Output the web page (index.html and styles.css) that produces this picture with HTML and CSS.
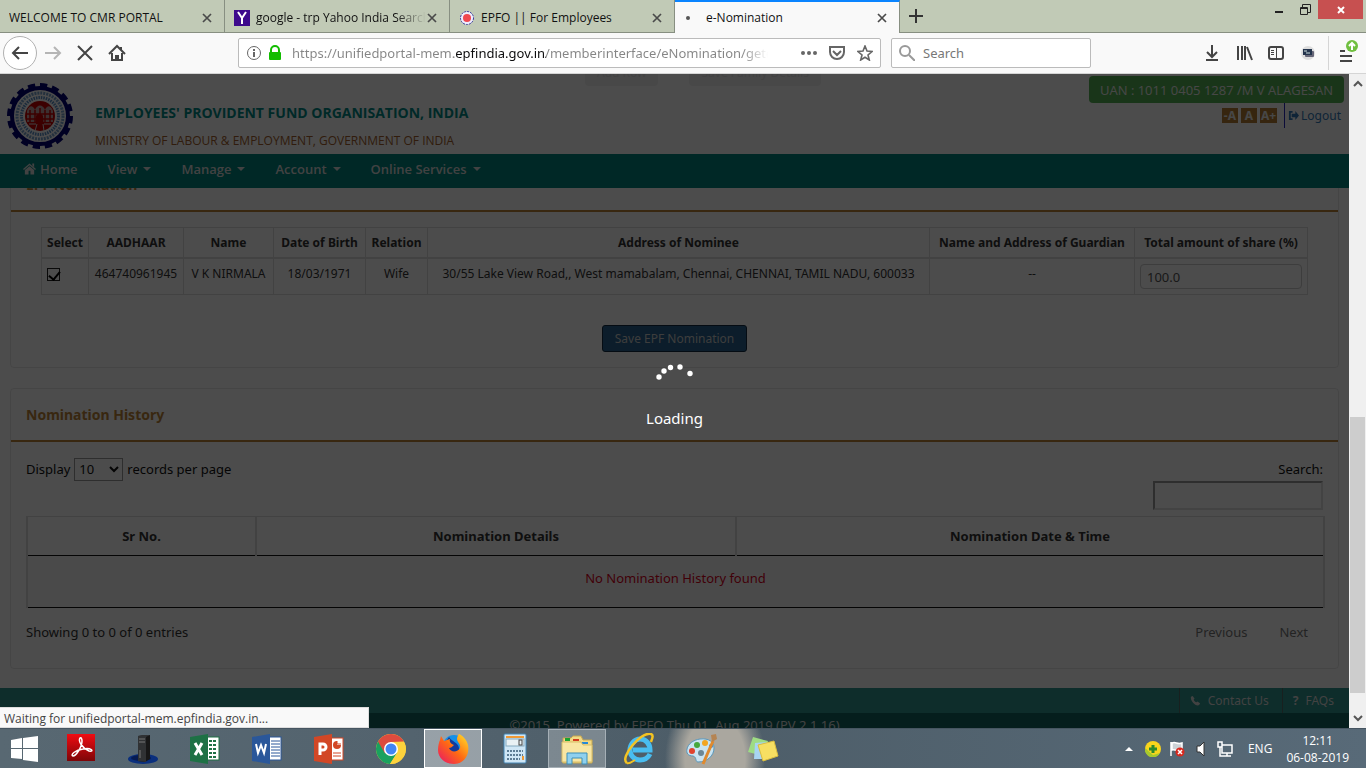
FILE: index.html
```html
<!DOCTYPE html>
<html lang="en">
<head>
<meta charset="utf-8">
<title>e-Nomination</title>
<link rel="stylesheet" href="styles.css">
</head>
<body>
<svg class="defs" aria-hidden="true">
  <symbol id="close" viewBox="0 0 12 12"><path d="M2 2l8 8M10 2l-8 8" fill="none" stroke="#4a4a4a" stroke-width="1.700"/></symbol>
  <symbol id="emblem" viewBox="0 0 66 66">
    <circle cx="33" cy="33" r="28" fill="none" stroke="#000075" stroke-width="4"/>
    <circle cx="33" cy="33" r="30.500" fill="none" stroke="#000075" stroke-width="5" pathLength="160" stroke-dasharray="6 4"/>
    <circle cx="33" cy="33" r="23" fill="none" stroke="#7ba3cf" stroke-width="3" stroke-dasharray="2 1"/>
    <circle cx="33" cy="33" r="18.500" fill="none" stroke="#5a8fc8" stroke-width="3" stroke-dasharray="1.500 1"/>
    <circle cx="33" cy="33" r="15" fill="#c80000"/>
    <path d="M20 28c2-6 6-6 8-1 2-6 8-6 10 0 2-5 6-5 8 1v11H20z" fill="#c9a0a0"/>
    <path d="M19 31h28M19 36h28M23 27v13M28 27v13M33 25v15M38 27v13M43 27v13" stroke="#c80000" stroke-width="1.500"/>
    <path d="M29 33c1-3 6-3 7 0l1 14h-9z" fill="#c80000"/>
    <path d="M30 41l-2 7M36 41l1 7M22 41h7M37 41h7" stroke="#ddd"/>
  </symbol>
</svg>

<div class="tabs">
  <div class="tab"><span class="tab-title">WELCOME TO CMR PORTAL</span><button class="tab-close" aria-label="Close tab"><svg><use href="#close"/></svg></button></div>
  <div class="tab"><svg class="fav" viewBox="0 0 16 16"><rect width="16" height="16" fill="#3d0a8c"/><path d="M4 2l4 6 4-6M8 8v6" fill="none" stroke="#fff" stroke-width="2"/></svg><span class="tab-title fade">google - trp Yahoo India Search</span><button class="tab-close" aria-label="Close tab"><svg><use href="#close"/></svg></button></div>
  <div class="tab"><svg class="fav" viewBox="0 0 16 16"><circle cx="8" cy="8" r="6.500" fill="#eef" stroke="#3a3a9a" stroke-dasharray="2 1"/><circle cx="8" cy="8" r="4" fill="#f04850"/></svg><span class="tab-title">EPFO || For Employees</span><button class="tab-close" aria-label="Close tab"><svg><use href="#close"/></svg></button></div>
  <div class="tab active"><svg class="fav" viewBox="0 0 16 16"><circle cx="4" cy="8" r="2" fill="#555"/></svg><span class="tab-title">e-Nomination</span><button class="tab-close" aria-label="Close tab"><svg><use href="#close"/></svg></button></div>
  <button class="new-tab" aria-label="New tab"><svg viewBox="0 0 14 14"><path d="M7 0v14M0 7h14" stroke="#333" stroke-width="2"/></svg></button>
  <div class="window-buttons">
    <button class="win" aria-label="Minimize"><svg viewBox="0 0 12 12"><path d="M2 8h8" stroke="#222" stroke-width="2"/></svg></button>
    <button class="win" aria-label="Restore"><svg viewBox="0 0 12 12"><path d="M3.500 3V.5h8v8H9M1.500 3.500h7v7h-7zM1 4.500h8" fill="none" stroke="#222"/></svg></button>
    <button class="win win-close" aria-label="Close"><svg viewBox="0 0 12 12"><path d="M3 3l6 6M9 3l-6 6" stroke="#fff" stroke-width="2"/></svg></button>
  </div>
</div>

<div class="toolbar">
  <button class="back" aria-label="Back"><svg viewBox="0 0 18 18"><path d="M17 9H2M8 3L2 9l6 6" fill="none" stroke="#444" stroke-width="2"/></svg></button>
  <button class="tool" aria-label="Forward"><svg viewBox="0 0 18 18"><path d="M1 9h15M10 3l6 6-6 6" fill="none" stroke="#b5b5b5" stroke-width="2"/></svg></button>
  <button class="tool" aria-label="Stop"><svg viewBox="0 0 18 18"><path d="M2 2l14 14M16 2L2 16" fill="none" stroke="#444" stroke-width="2"/></svg></button>
  <button class="tool" aria-label="Home"><svg viewBox="0 0 18 18"><path d="M1 10l8-8 8 8M4 9v7h10V9M13 3v3" fill="none" stroke="#444" stroke-width="2"/><path d="M7 16v-5h4v5" fill="#444"/></svg></button>
  <div class="url-box">
    <svg class="ic" viewBox="0 0 16 16"><circle cx="8" cy="8" r="6.500" fill="none" stroke="#666"/><path d="M8 7v5M8 4v2" stroke="#666" stroke-width="2"/></svg>
    <svg class="ic lock" viewBox="0 0 16 16"><path d="M4 8V5a4 4 0 0 1 8 0v3" fill="none" stroke="#12bc00" stroke-width="2"/><rect x="2" y="7" width="12" height="8" rx="1" fill="#12bc00"/></svg>
    <input class="url" type="text" aria-label="Address" value="https://unifiedportal-mem.epfindia.gov.in/memberinterface/eNomination/getenom">
    <button class="ic" aria-label="Page actions"><svg viewBox="0 0 16 16"><g fill="#666"><circle cx="2" cy="8" r="2"/><circle cx="8" cy="8" r="2"/><circle cx="14" cy="8" r="2"/></g></svg></button>
    <button class="ic" aria-label="Pocket"><svg viewBox="0 0 16 16"><path d="M1 2h14v5a7 7 0 0 1-14 0zM4 6l4 4 4-4" fill="none" stroke="#666" stroke-width="2"/></svg></button>
    <button class="ic" aria-label="Bookmark"><svg viewBox="0 0 16 16"><path d="M8 1l2 5 5 .5-4 3.500 1.300 5L8 12.300 3.700 15 5 10 1 6.500 6 6z" fill="none" stroke="#666" stroke-width="1.600"/></svg></button>
  </div>
  <div class="search-box">
    <svg class="ic" viewBox="0 0 16 16"><circle cx="6" cy="6" r="5" fill="none" stroke="#999" stroke-width="2"/><path d="M10 10l6 6" stroke="#999" stroke-width="2"/></svg>
    <input type="text" placeholder="Search" aria-label="Search the web">
  </div>
  <div class="tools-right">
    <button class="tool" aria-label="Downloads"><svg viewBox="0 0 18 18"><path d="M9 1v11M4 8l5 5 5-5M3 16h12" fill="none" stroke="#444" stroke-width="2"/></svg></button>
    <button class="tool" aria-label="Library"><svg viewBox="0 0 18 18"><path d="M3 2v14M7 2v14M10 2v14M12 3l5 13" fill="none" stroke="#444" stroke-width="2"/></svg></button>
    <button class="tool" aria-label="Sidebars"><svg viewBox="0 0 18 18"><rect x="2" y="3" width="14" height="12" rx="2" fill="none" stroke="#444" stroke-width="2"/><path d="M9.500 3v12M4 6.500h3M4 8.500h3M4 10.500h3" stroke="#444"/></svg></button>
    <button class="tool" aria-label="Extension"><svg viewBox="0 0 18 18"><circle cx="9" cy="9" r="7" fill="#ddd"/><rect x="6" y="7" width="9" height="6" rx="1" fill="#667"/><rect x="4" y="5" width="9" height="6" fill="#24344d"/><path d="M5 7h3M7 9h4" stroke="#cdd"/></svg></button>
    <button class="menu" aria-label="Menu"><svg viewBox="0 0 26 26"><path d="M5 11h5M5 16h12M5 21h12" stroke="#444" stroke-width="2"/><circle cx="17" cy="6" r="6" fill="#70bf3f"/><path d="M17 10V3M14 6l3-3 3 3" fill="none" stroke="#fff" stroke-width="2"/></svg></button>
  </div>
</div>

<div class="viewport">
  <div class="page">
    <header class="header">
      <div class="peek"><button>Add Row</button><button>Save Family Details</button></div>
      <svg class="logo"><use href="#emblem"/></svg>
      <div class="org"><h1>EMPLOYEES' PROVIDENT FUND ORGANISATION, INDIA</h1><p>MINISTRY OF LABOUR &amp; EMPLOYMENT, GOVERNMENT OF INDIA</p></div>
      <div class="account">
        <div class="uan">UAN : 1011 0405 1287 /M V ALAGESAN</div>
        <div class="account-links">
          <button class="size">-A</button><button class="size">A</button><button class="size">A+</button>
          <a class="logout" href="#"><svg viewBox="0 0 12 12"><path d="M5 2H2v8h3" fill="none" stroke="#337ab7" stroke-width="2"/><path d="M4 4h4V1l4 5-4 5V8H4z" fill="#337ab7"/></svg>Logout</a>
        </div>
      </div>
    </header>
    <nav class="nav">
      <a href="#"><svg class="house" viewBox="0 0 14 12"><path d="M7 0l7 6-1 1-6-5-6 5-1-1zM10 0h2v4l-2-2zM2 7l5-4 5 4v5H8V8H6v4H2z" fill="#ddd"/></svg>Home</a>
      <a href="#">View<i class="caret"></i></a>
      <a href="#">Manage<i class="caret"></i></a>
      <a href="#">Account<i class="caret"></i></a>
      <a href="#">Online Services<i class="caret"></i></a>
    </nav>
    <main class="content">
      <section class="panel first">
        <h2>EPF Nomination</h2>
        <div class="table-wrap">
          <table class="nominees">
            <colgroup><col class="c1"><col class="c2"><col class="c3"><col class="c4"><col class="c5"><col class="c6"><col class="c7"><col class="c8"></colgroup>
            <thead><tr><th>Select</th><th>AADHAAR</th><th>Name</th><th>Date of Birth</th><th>Relation</th><th>Address of Nominee</th><th>Name and Address of Guardian</th><th>Total amount of share (%)</th></tr></thead>
            <tbody><tr><td class="pick"><input type="checkbox" checked aria-label="Select V K NIRMALA"></td><td>464740961945</td><td>V K NIRMALA</td><td>18/03/1971</td><td>Wife</td><td>30/55 Lake View Road,, West mamabalam, Chennai, CHENNAI, TAMIL NADU, 600033</td><td>--</td><td><input class="share" type="text" value="100.0" aria-label="Total amount of share (%)"></td></tr></tbody>
          </table>
          <button class="save">Save EPF Nomination</button>
        </div>
      </section>
      <section class="panel">
        <h2>Nomination History</h2>
        <div class="history-wrap">
          <div class="filters">
            <label class="length">Display <select><option>10</option><option>25</option></select> records per page</label>
            <label class="find">Search:<input type="search"></label>
          </div>
          <table class="history">
            <colgroup><col class="h1"><col class="h2"><col class="h3"></colgroup>
            <thead><tr><th>Sr No.</th><th>Nomination Details</th><th>Nomination Date &amp; Time</th></tr></thead>
            <tbody><tr><td colspan="3">No Nomination History found</td></tr></tbody>
          </table>
          <div class="paging"><span>Showing 0 to 0 of 0 entries</span><div class="pages"><a href="#">Previous</a><a href="#">Next</a></div></div>
        </div>
      </section>
    </main>
    <footer>
      <div class="foot-links">
        <a href="#"><svg viewBox="0 0 12 12"><path d="M1 2l2-1 2 3-1 1c0 1 2 3 3 3l1-1 3 2-1 2C6 13 0 6 1 2z" fill="#ddd"/></svg>Contact Us</a>
        <a href="#"><b>?</b>FAQs</a>
      </div>
      <div class="copyright">©2015. Powered by EPFO Thu 01, Aug 2019 (PV 2.1.16)</div>
    </footer>
    <div class="overlay"><svg viewBox="0 0 42 24"><g fill="#fff"><circle cx="5" cy="17" r="2.700"/><circle cx="10" cy="11" r="2.700"/><circle cx="16.500" cy="7.500" r="2.700"/><circle cx="26" cy="7" r="2.700"/><circle cx="36" cy="13.500" r="2.700"/></g></svg><p>Loading</p></div>
    <div class="status">Waiting for unifiedportal-mem.epfindia.gov.in...</div>
  </div>
  <div class="scrollbar">
    <svg viewBox="0 0 10 10"><path d="M1 7l4-4 4 4" fill="none" stroke="#555" stroke-width="2"/></svg>
    <div class="track"><div class="thumb"></div></div>
    <svg viewBox="0 0 10 10"><path d="M1 3l4 4 4-4" fill="none" stroke="#555" stroke-width="2"/></svg>
  </div>
</div>

<div class="taskbar">
  <button class="start" aria-label="Start"><svg viewBox="0 0 28 26"><path d="M0 4l11-2v10H0zM12 2l15-2v12H12zM0 13h11v10L0 22zM12 13h15v13l-15-2z" fill="#fff"/></svg></button>
  <button class="app" aria-label="Adobe Reader"><svg viewBox="0 0 32 32"><defs><linearGradient id="ad" x2="0" y2="1"><stop stop-color="#f00c12"/><stop offset="1" stop-color="#7d0508"/></linearGradient></defs><rect x="2" y="1" width="28" height="27" fill="url(#ad)"/><path d="M15 5c-2 3 2 10 9 13 6 1 2-4-6-2-8 1-13 6-10 7 3 0 9-9 9-15 0-2-1-4-2-3z" fill="none" stroke="#fff" stroke-width="1.500"/></svg></button>
  <button class="app" aria-label="Computer"><svg viewBox="0 0 32 32"><ellipse cx="16" cy="26" rx="15" ry="5" fill="#0a2f7d"/><ellipse cx="14" cy="25" rx="10" ry="3" fill="#061b52"/><path d="M11 3l12-1v24l-5 3-7-1z" fill="#171717"/><path d="M11 3l4-1h8l-4 2v25l-8-1z" fill="#303234"/><path d="M12 6h6M12 9h6M13 17v8" stroke="#777"/></svg></button>
  <button class="app" aria-label="Excel"><svg viewBox="0 0 32 32"><rect x="17" y="4" width="13" height="23" fill="#fff" stroke="#1e7145"/><path d="M20 8h8M20 12h8M20 16h8M20 20h8M20 24h8" stroke="#1e7145" stroke-width="2" stroke-dasharray="3 1"/><path d="M1 4l18-3v30L1 28z" fill="#1e7145"/><path d="M6 10l7 12M13 10L6 22" stroke="#fff" stroke-width="3"/></svg></button>
  <button class="app" aria-label="Word"><svg viewBox="0 0 32 32"><rect x="17" y="4" width="13" height="23" fill="#fff" stroke="#2a579a"/><path d="M20 8h9M20 11h9M20 14h9M20 17h9M20 20h9M20 23h9" stroke="#2a579a"/><path d="M1 4l18-3v30L1 28z" fill="#2a579a"/><path d="M5 11l2 9 3-8 3 8 2-9" fill="none" stroke="#fff" stroke-width="2"/></svg></button>
  <button class="app" aria-label="PowerPoint"><svg viewBox="0 0 32 32"><rect x="17" y="5" width="13" height="22" fill="#fff" stroke="#d24726"/><circle cx="24" cy="12" r="4" fill="#d24726"/><path d="M24 12V7h5v5z" fill="#fff"/><path d="M24 11V8M24 11h4M20 20h8M20 23h8" stroke="#d24726"/><path d="M1 4l18-3v30L1 28z" fill="#d24726"/><path d="M7 22V11h3a3 3 0 0 1 0 6H7" fill="none" stroke="#fff" stroke-width="3"/></svg></button>
  <button class="app" aria-label="Chrome"><svg viewBox="0 0 32 32"><circle cx="16" cy="16" r="15" fill="#fdd23c"/><path d="M16 16L3 8.500A15 15 0 0 1 29 8.500L16 9z" fill="#dd4b3e"/><path d="M3 8.500A15 15 0 0 0 15 31l7-11-6-4z" fill="#1aa15f"/><path d="M3 8.500l7 12 6-12z" fill="#dd4b3e"/><path d="M16 9h13a15 15 0 0 1-14 22l7-11z" fill="#fdd23c"/><circle cx="16" cy="16" r="7" fill="#fff"/><circle cx="16" cy="16" r="5.500" fill="#4285f4"/></svg></button>
  <button class="app running front" aria-label="Firefox"><svg viewBox="0 0 32 32"><defs><linearGradient id="ff" x1="0" x2="1" y1="1" y2="0"><stop stop-color="#e8106c"/><stop offset=".5" stop-color="#ff6a13"/><stop offset="1" stop-color="#ffe529"/></linearGradient></defs><circle cx="17" cy="13" r="11" fill="#1590e8"/><path d="M8 10l4-6c3 5 9 5 10 11s-7 8-11 5z" fill="#123a9c"/><path d="M3 7l1-4 3 5 6-2c-1 3 1 5 4 6-2 2-3 3-5 3 2 5 9 4 11 0 1-4-3-6-3-9 0-2 1-4 2-5 3 1 8 6 9 11C33 23 26 31 17 31 8 31 1 25 1 17c0-4 1-8 2-10z" fill="url(#ff)"/></svg></button>
  <button class="app" aria-label="Calculator"><svg viewBox="0 0 32 32"><rect x="5" y="1" width="22" height="29" rx="1" fill="#cfe6f5" stroke="#4486b5"/><path d="M7 3h18v2H7z" fill="#f09a36"/><rect x="7" y="6" width="18" height="7" fill="#e9f1f4" stroke="#84a9bf"/><rect x="20" y="7" width="3" height="5" fill="none" stroke="#444"/><path d="M8 18h16M8 22h16M8 26h13" stroke="#5d7d95" stroke-width="2" stroke-dasharray="2 1"/><path d="M24 23v4" stroke="#f09a36" stroke-width="2"/></svg></button>
  <button class="app running" aria-label="File Explorer"><svg viewBox="0 0 32 32"><path d="M2 5h8l2-2h8l2 4h9v23H2z" fill="#f2d984" stroke="#c6a750"/><path d="M4 5h5v3H4z" fill="#1aa32f"/><path d="M12 6h6v2h-6z" fill="#d33b1e"/><path d="M21 9h6v2h-6z" fill="#2789d8"/><path d="M1 9h19l2 3h9v17H1z" fill="#f8e6a3" stroke="#d7bd69"/><path d="M6 31V20h20v11h-5v-6H11v6z" fill="#8fd0ee" stroke="#3c8fb8"/></svg></button>
  <button class="app" aria-label="Internet Explorer"><svg viewBox="0 0 32 32"><path d="M27 21c-2 4-5 6-10 6-6 0-10-5-10-10S11 6 17 6s10 5 10 11H10" fill="none" stroke="#49bdf0" stroke-width="5"/><path d="M4 30C-4 25 18-2 28 1c3 1 1 5 0 8" fill="none" stroke="#f4c322" stroke-width="2.500"/><path d="M4 30c2 1 5-1 8-3" fill="none" stroke="#f4c322" stroke-width="2"/></svg></button>
  <button class="app" aria-label="Paint"><svg viewBox="0 0 32 32"><path d="M15 6c9-1 14 3 14 9 0 8-7 14-16 14-3 0-1-5-5-6-5 0-7-3-6-7 1-5 6-9 13-10z" fill="#c9e4f2" stroke="#5a97bb"/><circle cx="16" cy="20" r="3" fill="#6c8795"/><circle cx="7" cy="18" r="3" fill="#e0432e"/><circle cx="12" cy="12" r="3" fill="#46a83d"/><circle cx="20" cy="10" r="3" fill="#f2a623"/><circle cx="26" cy="13" r="2" fill="#2f7fd0"/><path d="M18 31L28 8" stroke="#e08a2e" stroke-width="3"/><path d="M27 9l-1-7 5-1 1 5z" fill="#b58452"/></svg></button>
  <button class="app" aria-label="Sticky Notes"><svg viewBox="0 0 32 32"><path d="M6 4l15 4-5 15L1 19z" fill="#9edc84"/><path d="M8 10l14-1 1 17H7z" fill="#a8d4f2"/><path d="M11 12l16-4 4 15-15 5z" fill="#f7df62" stroke="#d9bd3f"/></svg></button>
  <div class="tray">
    <svg viewBox="0 0 16 16"><path d="M4 10l4-4 4 4z" fill="#fff"/></svg>
    <svg viewBox="0 0 16 16"><circle cx="8" cy="8" r="8" fill="#f9d51c"/><path d="M0 7A8 8 0 0 0 15 12l-7 2z" fill="#a6c92d"/><path d="M8 4v8M4 8h8" stroke="#2c8a2b" stroke-width="3"/></svg>
    <svg viewBox="0 0 16 16"><path d="M2 1v14M3 2c4-2 5 2 10 0v7c-5 2-6-1-10 0z" fill="#ccd2d6" stroke="#fff" stroke-width="1.500"/><circle cx="11" cy="11" r="4.500" fill="#d8291f"/><path d="M9 9l4 4M13 9l-4 4" stroke="#fff" stroke-width="1.500"/></svg>
    <svg viewBox="0 0 16 16"><path d="M4 5h3l4-4v14l-4-4H4z" fill="#fff" stroke="#333"/></svg>
    <svg viewBox="0 0 16 16"><path d="M5 4h10v8H5zM10 12v3M6 15h8M1 1h4v5H1zM3 6v9h3" fill="none" stroke="#fff" stroke-width="1.500"/></svg>
    <span class="lang">ENG</span>
    <div class="clock"><span>12:11</span><span>06-08-2019</span></div>
  </div>
</div>
</body>
</html>
```
FILE: styles.css
```css
* { box-sizing: border-box; }
body { margin: 0; height: 100vh; display: flex; flex-direction: column; overflow: hidden; font: 12px/16px "Noto Sans", "Open Sans", sans-serif; color: #111; }
button, input, select { font: inherit; color: inherit; }
button { border: 0; padding: 0; background: none; }
a { text-decoration: none; color: inherit; }
svg { display: block; flex: none; }
h1, h2, p { margin: 0; }
.defs { position: absolute; width: 0; height: 0; }

.tabs { display: flex; height: 33px; background: #c1cab6; flex: none; }
.tab { width: 225px; display: flex; align-items: center; gap: 6px; padding: 3px 11px 0 9px; border-right: 1px solid #878f81; border-bottom: 1px solid #878f81; }
.tab.active { background: #f9f9f9; border-top: 2px solid #0a84ff; border-bottom: 0; padding-top: 1px; }
.tab-title { flex: 1; overflow: hidden; white-space: nowrap; font-family: "Open Sans", sans-serif; }
.fade { margin-right: -6px; -webkit-mask-image: linear-gradient(to right, #000 82%, transparent); mask-image: linear-gradient(to right, #000 82%, transparent); }
.fav { width: 16px; height: 16px; }
.tab-close svg { width: 12px; height: 12px; }
.new-tab { width: 32px; display: flex; align-items: center; justify-content: center; border-bottom: 1px solid #878f81; }
.new-tab svg { width: 14px; height: 14px; }
.window-buttons { flex: 1; display: flex; justify-content: flex-end; align-items: flex-start; padding-right: 3px; border-bottom: 1px solid #878f81; }
.win { width: 26px; height: 19px; display: grid; place-items: center; }
.win svg { width: 12px; height: 12px; }
.win-close { width: 45px; background: #c75050; }

.toolbar { display: flex; align-items: center; flex: none; height: 41px; padding: 0 5px 0 3px; background: #f9f9f9; border-bottom: 1px solid #d5d5d5; }
.back { width: 34px; height: 34px; border: 1px solid #b1b1b1; border-radius: 50%; background: #fff; display: grid; place-items: center; }
.tool { width: 32px; height: 32px; display: grid; place-items: center; }
.tool svg, .back svg { width: 18px; height: 18px; }
.url-box, .search-box { display: flex; align-items: center; height: 30px; background: #fff; border: 1px solid #bbb; border-radius: 2px; font-size: 13px; padding: 0 7px; }
.url-box { flex: 1; margin-left: 105px; gap: 12px; }
.ic, .ic svg { width: 16px; height: 16px; }
.lock { margin-left: -7px; }
.url { flex: 1; min-width: 0; margin-left: -3px; height: 28px; padding: 0; border: 0; outline: 0; color: transparent; background: linear-gradient(to right, #858585 162px, #0c0c0d 162px, #0c0c0d 254px, #858585 254px, #858585 450px, transparent 476px); -webkit-background-clip: text; background-clip: text; }
.search-box { width: 200px; margin-left: 10px; gap: 8px; }
.search-box input { border: 0; outline: 0; width: 100%; padding: 0; }
.search-box input::placeholder { color: #777; opacity: 1; }
.tools-right { display: flex; align-items: center; margin-left: 105px; }
.menu { margin-left: 4px; padding-left: 6px; border-left: 1px solid #d5d5d5; height: 34px; }
.menu svg { width: 26px; height: 26px; }

.viewport { flex: 1; display: flex; min-height: 0; }
.page { flex: 1; min-width: 0; position: relative; display: flex; flex-direction: column; overflow: hidden; background: #fff; font-family: "Noto Sans", "Open Sans", sans-serif; font-size: 13px; line-height: 18px; color: #333; }
.header { position: relative; display: flex; align-items: flex-start; flex: none; height: 80px; padding: 2px 5px 0 7px; }
.peek { position: absolute; top: 0; left: 585px; display: flex; gap: 31px; height: 12px; overflow: hidden; align-items: flex-end; }
.peek button { height: 27px; padding: 0 12px; background: #f0f0f2; border-radius: 4px; color: #ddd; font-size: 12px; }
.logo { width: 66px; height: 66px; margin-top: 7px; }
.org { flex: 1; margin: 28px 0 0 22px; }
.org h1 { font-family: "Open Sans", sans-serif; font-size: 14px; line-height: 18px; color: #008b85; }
.org p { margin-top: 10px; font-family: "Open Sans", sans-serif; font-size: 12px; line-height: 18px; color: #a3602c; }
.uan { height: 27px; padding: 0 11px; line-height: 28px; font-family: "Open Sans", sans-serif; font-size: 13px; background: #55b355; color: #eee; border-radius: 4px; }
.account-links { display: flex; justify-content: flex-end; align-items: center; gap: 3px; height: 25px; }
.size { height: 15px; min-width: 16px; padding: 0 1px; line-height: 15px; font-weight: 700; font-size: 12px; background: #b57e33; color: #eee; }
.logout { display: flex; align-items: center; gap: 2px; margin-left: 4px; padding: 0 3px; border-left: 1px solid #2a2ac0; height: 25px; font-size: 12px; color: #337ab7; }
.logout svg { width: 11px; height: 11px; }
.nav { display: flex; flex: none; gap: 30px; height: 34px; padding: 0 23px 4px; align-items: center; background: #008680; color: #ddd; font-family: "Open Sans", sans-serif; font-weight: 600; }
.nav a { display: flex; align-items: center; }
.house { width: 13px; height: 12px; margin-right: 4px; }
.caret { margin-left: 6px; border: 4px solid transparent; border-top-color: #ddd; border-bottom: 0; }

.content { flex: 1; min-height: 0; overflow: hidden; padding: 0 10px; }
.panel { border: 1px solid #e8e8e8; border-radius: 4px; margin-bottom: 20px; }
.panel.first { margin-top: -30px; }
.panel h2 { height: 53px; padding: 0 15px; font-size: 14px; line-height: 52px; color: #bd8438; border-bottom: 2px solid #bd8438; }
.table-wrap { padding: 15px 30px; display: flex; flex-direction: column; align-items: center; }
table { width: 100%; border-collapse: collapse; table-layout: fixed; text-align: center; }
th, td { white-space: nowrap; }
.nominees { font-size: 12px; }
.nominees th, .nominees td { border: 1px solid #ddd; padding: 5px 0; vertical-align: top; }
.nominees th { height: 30px; border-bottom-width: 2px; padding: 6px 0 5px; }
.nominees td { height: 35px; padding: 6px 0 4px; }
.c1 { width: 47px; } .c2 { width: 95px; } .c3 { width: 90px; } .c4 { width: 92px; } .c5 { width: 62px; } .c7 { width: 205px; } .c8 { width: 173px; }
.nominees .pick { text-align: left; padding-left: 5px; }
.nominees td:last-child { padding: 5px; }
.pick input { appearance: none; display: block; width: 13px; height: 13px; margin: 3px 0 0; border: 1px solid #222; position: relative; }
.pick input::after { content: ""; position: absolute; left: 3px; top: 0; width: 5px; height: 9px; border: solid #000; border-width: 0 2px 2px 0; transform: rotate(40deg); }
.share { display: block; width: 100%; height: 25px; border: 1px solid #ccc; border-radius: 4px; padding: 0 6px; background: #fff; color: #555; font-size: 13px; }
.save { flex: none; margin-top: 30px; height: 27px; padding: 0 12px; background: #28618f; border: 1px solid #122b40; border-radius: 3px; color: #ccc; font-size: 12px; }
.first .table-wrap { height: 155px; }
.history-wrap { padding: 15px 13px 0 15px; height: 226px; }
.filters { display: flex; justify-content: space-between; height: 59px; color: #111; }
.length { display: flex; height: 24px; align-items: center; gap: 4px; }
.length select { width: 49px; height: 23px; padding: 0; border: 1px solid #999; background: #fff; }
.find { display: flex; flex-direction: column; align-items: flex-end; padding: 3px 2px 0 0; }
.find input { width: 170px; height: 29px; margin-top: 3px; border: 2px solid #e0e0e0; border-top-color: #999; border-left-color: #999; background: #fff; }
.history { border: 2px solid #ddd; border-top-width: 1px; border-bottom: 1px solid #111; }
.history th { height: 39px; border-left: 2px solid #ddd; border-bottom: 1px solid #111; }
.history td { height: 52px; padding: 0 0 8px; background: #f9f9f9; color: #d9001b; }
.h1 { width: 229px; } .h2 { width: 480px; }
.paging { display: flex; justify-content: space-between; padding-top: 15px; }
.pages { display: flex; gap: 32px; padding-right: 17px; color: #777; }
footer { flex: none; color: #ddd; }
.foot-links { display: flex; justify-content: flex-end; height: 25px; background: #2f968f; font-size: 12px; }
.foot-links a { display: flex; align-items: center; gap: 7px; padding: 0 15px 0 10px; border-left: 1px solid #526d69; }
.foot-links a:first-child { padding-right: 13px; }
.foot-links svg { width: 11px; height: 11px; }
.copyright { height: 15px; overflow: hidden; background: #116763; text-align: center; line-height: 24px; font-size: 13px; }
.overlay { position: absolute; inset: 0; background: rgba(0, 0, 0, .7); display: flex; flex-direction: column; align-items: center; padding-top: 286px; color: #fff; }
.overlay svg { width: 42px; height: 24px; }
.overlay p { margin-top: 24px; font-size: 15px; line-height: 20px; }
.status { position: absolute; left: 0; bottom: 0; width: 369px; height: 21px; padding: 0 4px; background: #f9f9f9; border: 1px solid #ddd; border-left: 0; font: 12px/21px "Open Sans", sans-serif; color: #444; }
.scrollbar { width: 17px; background: #f0f0f0; display: flex; flex-direction: column; align-items: center; padding: 5px 0; gap: 4px; }
.scrollbar svg { width: 10px; height: 10px; }
.track { flex: 1; width: 15px; display: flex; flex-direction: column; justify-content: flex-end; padding-bottom: 16px; }
.thumb { height: 46%; background: #cdcdcd; }

.taskbar { display: flex; flex: none; height: 40px; background: radial-gradient(ellipse 50px 70px at 715px 30px, #aaa79f 60%, transparent), linear-gradient(to right, #586872, #53636e 30%, #4d5d68 50%, #586a78); border-top: 1px solid #465561; color: #fff; }
.start { width: 50px; display: grid; place-items: center; }
.start svg { width: 28px; height: 26px; }
.app { width: 58px; margin: 0 2px; display: grid; place-items: center; }
.app svg { width: 32px; height: 32px; }
.running { background: rgba(255, 255, 255, .25); border: 1px solid #a5afb6; }
.front { background: rgba(255, 255, 255, .4); border-color: #fff; }
.tray { flex: 1; display: flex; justify-content: flex-end; align-items: center; gap: 8px; padding-right: 17px; font-family: "Open Sans", sans-serif; }
.tray svg { width: 16px; height: 16px; }
.lang { margin-left: 7px; }
.clock { display: flex; flex-direction: column; align-items: center; margin-left: 6px; line-height: 17px; }
```
